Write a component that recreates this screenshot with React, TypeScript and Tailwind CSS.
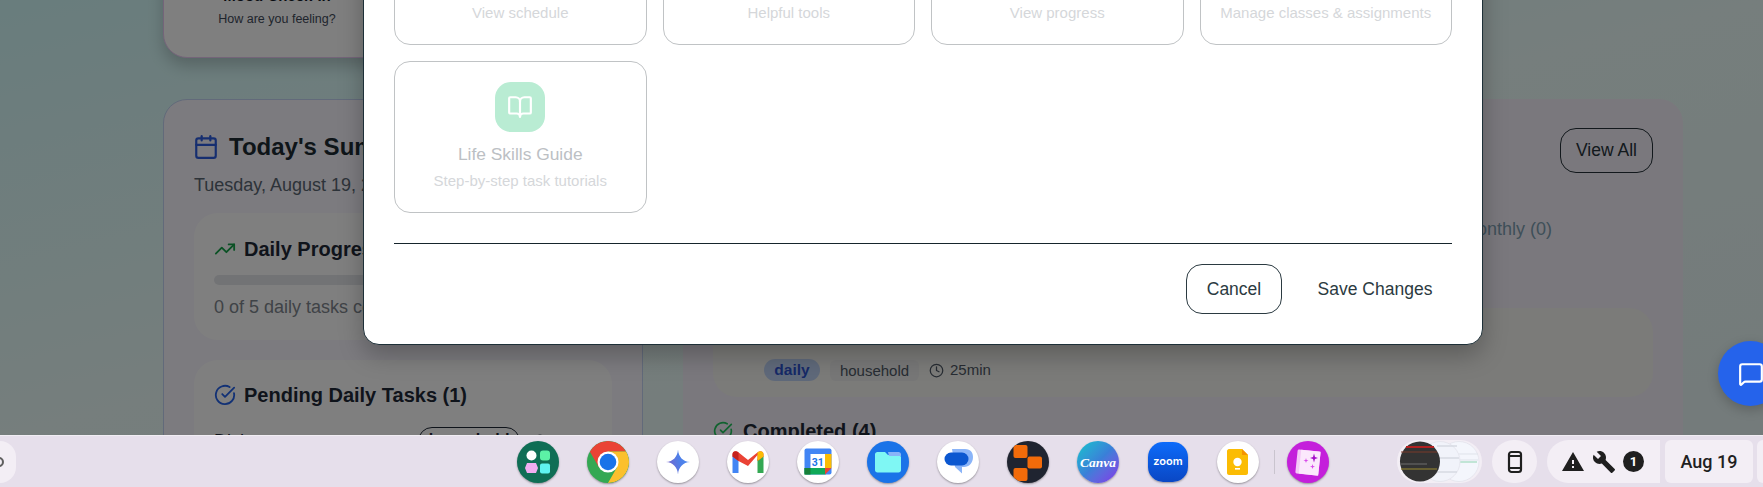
import React from "react";
import { Calendar, TrendingUp, CircleCheckBig, Clock, BookOpen, MessageSquare, GraduationCap, Wrench as ToolIcon, BarChart3, CalendarDays } from "lucide-react";

function Disc({ children, cls = "bg-white" }: { children: React.ReactNode; cls?: string }) {
  return (
    <div className={`w-[42px] h-[42px] rounded-full shrink-0 shadow-[0_1px_2px_rgba(0,0,0,0.35)] overflow-hidden ${cls}`}>
      <svg width="42" height="42" viewBox="0 0 42 42">{children}</svg>
    </div>
  );
}

function ModalCard({ icon, iconCls, title, desc }: { icon: React.ReactNode; iconCls: string; title: string; desc: string }) {
  return (
    <div className="h-[152px] rounded-2xl border border-[#c0c3c5] flex flex-col items-center pt-5">
      <div className={`w-[50px] h-[50px] rounded-2xl flex items-center justify-center ${iconCls}`}>{icon}</div>
      <div className="text-[17.4px] leading-7 mt-[8px] text-[#bcc0c4]">{title}</div>
      <div className="text-[15px] leading-5 mt-[3px] text-[#d5d7da]">{desc}</div>
    </div>
  );
}

export default function App() {
  return (
    <div className="w-[1763px] h-[487px] overflow-hidden flex flex-col font-['Liberation_Sans',Arial,sans-serif] bg-[#e6dfeb]">
      <div className="relative h-[435px] shrink-0 overflow-hidden">
        {/* page beneath the dialog */}
        <div className="h-full flex flex-col bg-linear-to-br from-[#d2fafa] via-[#ecfdfa] to-[#e8f6f6] pl-[163px] pr-[80px]">
          <div className="w-[480px] h-[120px] shrink-0 -mt-[62px] rounded-3xl border border-[#e9c8f3] bg-[#fefefe] shadow-[0_8px_16px_rgba(0,0,0,0.2)] flex flex-col items-start justify-end pb-[29px]">
            <div className="w-[226px] text-center">
              <div className="text-[15px] leading-6 font-bold text-[#111827]">Mood Check-In</div>
              <div className="text-[12.5px] leading-[18px] mt-[2px] text-[#3f4a5a]">How are you feeling?</div>
            </div>
          </div>
          <div className="grid grid-cols-[480px_1000px] gap-[40px] mt-[41px] shrink-0">
            <div className="h-[400px] rounded-3xl border border-[#c4d4f4] bg-[#f8f6fe] px-[30px] pt-[31px]">
              <div className="flex items-center gap-[10px] h-8">
                <Calendar size={26} className="text-[#2c5de0] -ml-[1px] shrink-0" />
                <div className="text-2xl font-bold text-[#1c2b33]">Today's Summary</div>
              </div>
              <div className="text-lg leading-7 mt-2 text-[#5a6672]">Tuesday, August 19, 2025</div>
              <div className="mt-[14px] h-[127px] rounded-3xl bg-white px-5 pt-[22px]">
                <div className="flex items-center gap-2 h-7">
                  <TrendingUp size={22} className="text-[#16a34a] shrink-0" />
                  <div className="text-xl font-bold text-[#1f2937]">Daily Progress</div>
                </div>
                <div className="h-[10px] mt-3 rounded-full bg-[#e5e7eb]" />
                <div className="text-lg leading-7 mt-2 text-[#7f868e]">0 of 5 daily tasks completed</div>
              </div>
              <div className="mt-5 rounded-3xl bg-white px-5 pt-[21px] pb-6">
                <div className="flex items-center gap-2 h-7">
                  <CircleCheckBig size={22} className="text-[#2563eb] shrink-0" />
                  <div className="text-xl font-bold text-[#1f2937]">Pending Daily Tasks (1)</div>
                </div>
                <div className="flex items-start justify-between mt-[18px]">
                  <div className="text-lg leading-7 text-[#1f2937]">Dishes</div>
                  <div className="flex items-center gap-[13px]">
                    <div className="w-[102px] h-[28px] rounded-full border border-[#1f2937] text-center text-base font-bold text-[#1f2937] leading-6">household</div>
                    <div className="flex items-center gap-1 text-[15px] text-[#4b5563]"><Clock size={14} />25min</div>
                  </div>
                </div>
              </div>
            </div>

            <div className="h-[400px] rounded-3xl bg-[#f5f1fa] px-[30px] pt-[29px]">
              <div className="flex justify-end">
                <div className="w-[93px] h-[45px] rounded-2xl border border-[#243038] flex items-center justify-center text-[17.5px] text-[#27343b]">View All</div>
              </div>
              <div className="flex justify-end pr-[101px] mt-[42px] text-lg leading-7 text-[#7d9fb2]">Monthly (0)</div>
              <div className="mt-[65px] h-[89px] rounded-3xl bg-[#f6f6f2] px-[20px] pt-[16px]">
                <CircleCheckBig size={22} className="text-[#22c55e] ml-[5px]" />
                <div className="flex items-center mt-[13px] pl-[31px] text-[15px]">
                  <div className="w-[56px] h-[22px] rounded-full bg-[#bfd3f5] text-center text-[15.5px] font-bold leading-[22px] text-[#2c52cf]">daily</div>
                  <div className="ml-[10px] w-[89px] h-[21px] rounded-md bg-[#eeeeef] text-center leading-[21px] text-[#4f5966]">household</div>
                  <Clock size={15} className="ml-[10px] text-[#4f5966]" />
                  <div className="ml-[6px] text-[#4f5966]">25min</div>
                </div>
              </div>
              <div className="flex items-center gap-[10px] mt-[22px]">
                <CircleCheckBig size={20} className="text-[#22c55e]" />
                <div className="text-xl font-bold text-[#1f2937] leading-6">Completed (4)</div>
              </div>
            </div>
          </div>
        </div>

        {/* dim layer */}
        <div className="absolute inset-0 bg-[rgba(0,0,0,0.5)]" />

        {/* dialog */}
        <div className="absolute left-[363px] bottom-[90px] w-[1120px] rounded-2xl bg-white border border-[#1e3038] shadow-[0_10px_25px_rgba(0,0,0,0.25)] px-[30px] pb-[30px]">
          <div className="grid grid-cols-4 gap-4">
            <ModalCard iconCls="bg-[#bcd4fb]" icon={<CalendarDays size={26} className="text-white" />} title="Calendar" desc="View schedule" />
            <ModalCard iconCls="bg-[#e3c8f7]" icon={<ToolIcon size={26} className="text-white" />} title="Tools" desc="Helpful tools" />
            <ModalCard iconCls="bg-[#fbd8b8]" icon={<BarChart3 size={26} className="text-white" />} title="Progress" desc="View progress" />
            <ModalCard iconCls="bg-[#c7d0f8]" icon={<GraduationCap size={26} className="text-white" />} title="School" desc="Manage classes &amp; assignments" />
            <ModalCard iconCls="bg-[#b9ecd3]" icon={<BookOpen size={26} className="text-white" />} title="Life Skills Guide" desc="Step-by-step task tutorials" />
          </div>
          <div className="h-px bg-[#16252c] mt-[30px]" />
          <div className="flex justify-end gap-4 pt-5 text-[17.5px] text-[#2b3a41]">
            <div className="w-[96px] h-[50px] rounded-2xl border border-[#2b3a41] flex items-center justify-center">Cancel</div>
            <div className="w-[154px] h-[50px] flex items-center justify-center">Save Changes</div>
          </div>
        </div>

        {/* chat button */}
        <div className="absolute -right-[20px] bottom-[29px] w-[65px] h-[65px] rounded-full bg-[#2563eb] shadow-[0_4px_12px_rgba(0,0,0,0.2)] flex items-center justify-start pl-[20px]">
          <MessageSquare size={26} className="text-white shrink-0" />
        </div>
      </div>

      {/* ChromeOS shelf */}
      <div className="h-[52px] shrink-0 border-t border-[#f1edf3] flex items-center overflow-hidden">
        <div className="w-[16px] h-[42px] rounded-r-full bg-[#f3eef5] overflow-hidden flex items-center shrink-0">
          <div className="w-[10px] h-[10px] rounded-full border-2 border-[#5f5f5f] -ml-[6px]" />
        </div>

        <div className="flex items-center gap-[28px] ml-[501px]">
          <Disc cls="bg-[#0f6e55]">
            <circle cx="14.5" cy="14.5" r="5" fill="#ffffff" />
            <rect x="23" y="9.5" width="10" height="10" rx="3" fill="#5cf2a6" />
            <polygon points="10,22 19,22 21,27 19,32 10,32 8,27" fill="#efaef0" />
            <rect x="23" y="22.5" width="10" height="10" rx="2" fill="#5ff3f0" />
          </Disc>
          <Disc cls="bg-[#34a853]">
            <path d="M2.8 10.5A21 21 0 0 1 39.2 10.5H21L11.9 26.2Z" fill="#ea4335" />
            <path d="M39.2 10.5A21 21 0 0 1 21 42L30.1 26.2L21 10.5Z" fill="#fbc02d" />
            <circle cx="21" cy="21" r="10.5" fill="#ffffff" />
            <circle cx="21" cy="21" r="8.3" fill="#1a73e8" />
          </Disc>
          <Disc>
            <defs>
              <linearGradient id="gem" x1="0" y1="0.6" x2="1" y2="0.3">
                <stop offset="0" stopColor="#7a62c8" />
                <stop offset="0.55" stopColor="#4f7fe8" />
                <stop offset="1" stopColor="#4a8af0" />
              </linearGradient>
            </defs>
            <path d="M21 8.5C21.5 16 26 20.5 33 21C26 21.5 21.5 26 21 33.5C20.5 26 16 21.5 9 21C16 20.5 20.5 16 21 8.5Z" fill="url(#gem)" />
          </Disc>
          <Disc>
            <path d="M5.5 15V32H11.5V18Z" fill="#4285f4" />
            <path d="M36.5 15V32H30.5V18Z" fill="#34a853" />
            <path d="M5.5 13.5C5.5 10 9 9.5 11 11L21 19L31 11C33 9.5 36.5 10 36.5 13.5V15.5L30.5 20V14L21 25L11.5 20L5.5 15.5Z" fill="#ea4335" />
            <path d="M5.5 13.5C5.5 10 9 9.5 11.5 11.5V20L5.5 15.5Z" fill="#c5221f" />
            <path d="M30.5 11.5C33 9.5 36.5 10 36.5 13.5V15.5L30.5 20Z" fill="#fbbc04" />
          </Disc>
          <Disc>
            <rect x="7.5" y="7.5" width="27" height="26" rx="2" fill="#4285f4" />
            <rect x="28" y="13" width="6.5" height="14" fill="#fbbc04" />
            <rect x="7.5" y="27" width="21" height="6.5" fill="#0fa958" />
            <rect x="7.5" y="27" width="6" height="6.5" fill="#188038" />
            <polygon points="28,27 34.5,27 28,33.5" fill="#ea4335" />
            <rect x="13.5" y="13" width="14.5" height="14" fill="#ffffff" />
            <text x="20.7" y="24.5" textAnchor="middle" fontSize="10.5" fontWeight="700" fill="#1a73e8" fontFamily="Roboto, sans-serif">31</text>
          </Disc>
          <Disc cls="bg-[#1a73e8]">
            <path d="M8 13.5C8 12 9 11 10.5 11H18L21 14H31.5C33 14 34 15 34 16.5V29C34 30.5 33 31.5 31.5 31.5H10.5C9 31.5 8 30.5 8 29Z" fill="#7ff7f4" />
            <path d="M21 11H31.5C33 11 34 12 34 13.5V15H22Z" fill="#8ab4f8" />
          </Disc>
          <Disc>
            <path d="M15 8H28C34 8 36 12 36 16C36 22 32 26 27 26H25V32.5L18 26Z" fill="#8ab4f8" />
            <rect x="7.5" y="11.5" width="24" height="13" rx="6.5" fill="#0b57d0" />
          </Disc>
          <Disc cls="bg-[#1f2430]">
            <rect x="6.5" y="4" width="14" height="13" rx="2" fill="#f26b0a" />
            <rect x="20.5" y="15.5" width="14.5" height="12" rx="2" fill="#f26b0a" />
            <rect x="6.5" y="27" width="14" height="13" rx="2" fill="#f26b0a" />
          </Disc>
          <Disc cls="bg-linear-to-br from-[#00c4cc] via-[#3a7fd8] to-[#7d2ae8]">
            <text x="21" y="25.5" textAnchor="middle" fontSize="13.5" fontWeight="700" fontStyle="italic" fill="#ffffff" fontFamily="'Liberation Serif', serif">Canva</text>
          </Disc>
          <div className="w-[42px] h-[42px] shrink-0 flex items-center justify-center">
            <div className="w-[40px] h-[40px] rounded-[15px] bg-linear-to-b from-[#0d6bfa] to-[#0a47c4] shadow-[0_1px_2px_rgba(0,0,0,0.35)] flex items-center justify-center text-white text-[11px] font-semibold leading-none font-['Inter',sans-serif]">zoom</div>
          </div>
          <Disc>
            <path d="M12 8H25L31 14V32C31 33 30 34 29 34H12C11 34 10 33 10 32V10C10 9 11 8 12 8Z" fill="#fbbc04" />
            <path d="M25 8L31 14H25Z" fill="#f59300" />
            <circle cx="20.5" cy="21" r="4.2" fill="#ffffff" />
            <rect x="18" y="27" width="5" height="1.6" fill="#ffffff" />
          </Disc>
        </div>

        <div className="w-px h-[24px] bg-[#c9c4ce] ml-[15px] mr-[12px] shrink-0" />

        <Disc cls="bg-[#c41fdb]">
          <g transform="rotate(6 21 21)">
            <rect x="9.5" y="9.5" width="23" height="24" rx="1.5" fill="#f4c8f7" />
            <path d="M13 9.5H32.5V33.5H13Z" fill="#fbe8fc" />
          </g>
          <path d="M27 12.5L28 16L31 17L28 18L27 21.5L26 18L23 17L26 16Z" fill="#a40fc9" />
          <path d="M19 17L19.6 19L21.5 19.6L19.6 20.2L19 22L18.4 20.2L16.5 19.6L18.4 19Z" fill="#d94bea" />
          <path d="M25.5 23L26.1 25L28 25.6L26.1 26.2L25.5 28L24.9 26.2L23 25.6L24.9 25Z" fill="#d94bea" />
        </Disc>

        <div className="relative w-[85px] h-[43px] ml-[68px] rounded-full bg-[#f3eef5] overflow-hidden shrink-0">
          <svg width="85" height="43" viewBox="0 0 85 43">
            <circle cx="62" cy="21.5" r="20" fill="#f4f6fc" stroke="#e6e6ee" />
            <path d="M60 14H81M60 20H81" stroke="#dfe3ea" strokeWidth="1" />
            <path d="M62 22H80" stroke="#8fd4b0" strokeWidth="1" />
            <circle cx="43" cy="21.5" r="20" fill="#f1f3fa" stroke="#e6e6ee" />
            <path d="M40 6H60M40 18H62M40 32H60" stroke="#d6dae2" strokeWidth="1.5" />
            <circle cx="23" cy="21.5" r="20" fill="#333333" />
            <path d="M9 7H37" stroke="#b02020" strokeWidth="2" />
            <path d="M4 12H40" stroke="#7a3a2a" strokeWidth="1" />
            <path d="M4 24H30" stroke="#6f6f6f" strokeWidth="1" />
            <path d="M4 29H40" stroke="#9a8a30" strokeWidth="1" />
          </svg>
        </div>

        <div className="w-[45px] h-[43px] ml-[10px] rounded-full bg-[#f3eef5] flex items-center justify-center shrink-0">
          <svg width="24" height="24" viewBox="0 0 24 24" fill="none" stroke="#1f1f1f" strokeWidth="2.2">
            <rect x="6" y="2" width="12" height="20" rx="2.5" />
            <path d="M6 6H18M6 18H18" />
          </svg>
        </div>

        <div className="w-[113px] h-[43px] ml-[10px] rounded-l-full rounded-r-md bg-[#f3eef5] flex items-center pl-[14px] gap-[7px] shrink-0">
          <svg width="24" height="24" viewBox="0 0 24 24" fill="#1f1f1f"><path d="M1 21h22L12 2 1 21zm12-3h-2v-2h2v2zm0-4h-2v-4h2v4z" /></svg>
          <svg width="24" height="24" viewBox="0 0 24 24" fill="#1f1f1f"><path d="M22.7 19l-9.1-9.1c.9-2.3.4-5-1.5-6.9-2-2-5-2.4-7.4-1.3L9 6 6 9 1.6 4.7C.4 7.1.9 10.1 2.9 12.1c1.9 1.9 4.6 2.4 6.9 1.5l9.1 9.1c.4.4 1 .4 1.4 0l2.3-2.3c.5-.4.5-1.1.1-1.4z" /></svg>
          <div className="w-[21px] h-[21px] rounded-full bg-[#1f1f1f] text-white text-[13px] font-bold flex items-center justify-center font-['Roboto',sans-serif]">1</div>
        </div>

        <div className="w-[88px] h-[43px] ml-[5px] rounded-md bg-[#f3eef5] flex items-center justify-center text-lg font-medium text-[#1f1f1f] font-['Roboto',sans-serif] shrink-0">Aug 19</div>
        <div className="w-[20px] h-[43px] ml-[4px] rounded-md bg-[#f3eef5] shrink-0" />
      </div>
    </div>
  );
}
